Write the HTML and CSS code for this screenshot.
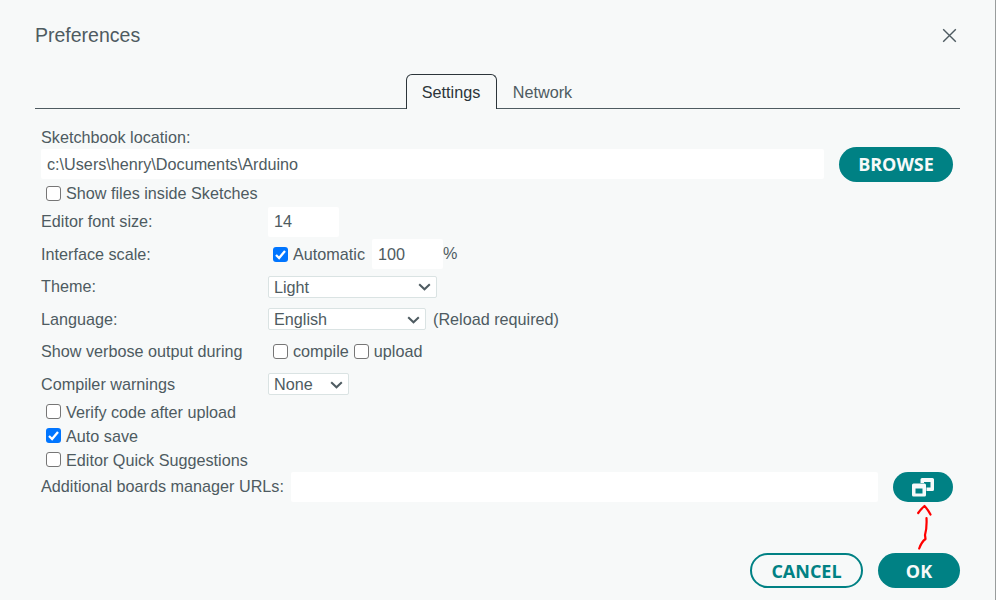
FILE: index.html
```html
<!DOCTYPE html>
<html lang="en">
<head>
<meta charset="utf-8">
<title>Preferences</title>
<link rel="stylesheet" href="styles.css">
</head>
<body>
<main class="dialog">
  <header class="titlebar">
    <h1>Preferences</h1>
    <svg class="close" width="15" height="15" viewBox="0 0 15 15"><path d="M1.2 1.2 13.8 13.8M13.8 1.2 1.2 13.8"/></svg>
  </header>
  <nav class="tabs">
    <span class="tab active">Settings</span>
    <span class="tab">Network</span>
  </nav>
  <section class="form">
    <div class="row r23 heading">Sketchbook location:</div>
    <div class="row r35 spread">
      <span class="field path">c:\Users\henry\Documents\Arduino</span>
      <span class="button browse">BROWSE</span>
    </div>
    <div class="row r23 option"><span class="check"></span><span class="text">Show files inside Sketches</span></div>
    <div class="row r33"><span class="label">Editor font size:</span><span class="field number">14</span></div>
    <div class="row r32"><span class="label flush">Interface scale:</span>
      <span class="option"><span class="check on"><svg viewBox="0 0 15 15"><path d="M3 8 6.1 11 12 4"/></svg></span><span>Automatic</span></span>
      <span class="field number scale">100</span><span class="percent">%</span>
    </div>
    <div class="row r33"><span class="label">Theme:</span>
      <span class="select theme">Light<svg width="13" height="8" viewBox="0 0 13 8"><path d="M1.2 1.2 6.5 6.3 11.8 1.2"/></svg></span>
    </div>
    <div class="row r32"><span class="label flush">Language:</span>
      <span class="select language">English<svg width="13" height="8" viewBox="0 0 13 8"><path d="M1.2 1.2 6.5 6.3 11.8 1.2"/></svg></span>
      <span class="note">(Reload required)</span>
    </div>
    <div class="row r33"><span class="label">Show verbose output during</span>
      <span class="option"><span class="check"></span><span class="text">compile</span></span>
      <span class="option second"><span class="check"></span><span class="text">upload</span></span>
    </div>
    <div class="row r32"><span class="label flush">Compiler warnings</span>
      <span class="select warnings">None<svg width="13" height="8" viewBox="0 0 13 8"><path d="M1.2 1.2 6.5 6.3 11.8 1.2"/></svg></span>
    </div>
    <div class="row r24 option"><span class="check raised"></span><span>Verify code after upload</span></div>
    <div class="row r24 option"><span class="check on raised"><svg viewBox="0 0 15 15"><path d="M3 8 6.1 11 12 4"/></svg></span><span>Auto save</span></div>
    <div class="row r24 option"><span class="check raised"></span><span>Editor Quick Suggestions</span></div>
    <div class="row r30"><span class="urls-label">Additional boards manager URLs:</span><span class="field urls"></span>
      <span class="button expand"><svg width="22" height="19" viewBox="0 0 22 19"><path fill-rule="evenodd" d="M10 0H20.500Q22 0 22 1.500V11.500Q22 13 20.500 13H14.500V9.500H18.500V4H12V6H8.500V1.500Q8.500 0 10 0ZM1.500 5.500H12.500Q14 5.500 14 7V17Q14 18.500 12.500 18.500H1.500Q0 18.500 0 17V7Q0 5.500 1.500 5.500ZM3.500 10.500V15.500H10.500V10.500Z"/></svg></span>
    </div>
  </section>
  <footer class="actions">
    <span class="button cancel">CANCEL</span>
    <span class="button ok">OK</span>
  </footer>
  <svg class="arrow" width="18" height="50" viewBox="0 0 18 50"><path d="M2.200 9Q5 5 8.500 2Q11.500 5 14.500 10.500M10.500 14Q11 24 9 31L9.500 35Q5.500 38 3.200 44.500"/></svg>
</main>
</body>
</html>
```
FILE: styles.css
```css
* { box-sizing: border-box; }
body {
  margin: 0;
  background: #f7f9f9;
  color: #4e5b61;
  font: 16.2px/20px "Liberation Sans", Arial, sans-serif;
}
.dialog {
  position: relative;
  height: 600px;
  padding: 0 35px;
  border-right: 1px solid #999d9d;
  overflow: hidden;
  white-space: nowrap;
}
svg { fill: none; stroke: currentColor; flex: none; }
.titlebar {
  display: flex;
  align-items: center;
  justify-content: space-between;
  height: 70px;
  padding-right: 3px;
}
h1 { margin: 0; font-size: 19.500px; font-weight: 400; }
.close { stroke-width: 1.400; }
.tabs {
  display: flex;
  justify-content: center;
  height: 39px;
  padding: 4px 1px 0 0;
  border-bottom: 1px solid #4e5b61;
}
.tab { height: 35px; padding: 7px 15px; border: 1px solid transparent; border-bottom: 0; }
.tab.active { width: 91px; background: #f7f9f9; border-color: #2c353a; border-radius: 6px 6px 0 0; color: #2c353a; }
.form { padding: 15px 7px 0 6px; }
.row { display: flex; align-items: center; }
.heading { padding-top: 2px; }
.r23 { height: 23px; }
.r24 { height: 24px; }
.r30 { height: 30px; }
.r32 { height: 32px; }
.r33 { height: 33px; }
.r35 { height: 35px; }
.spread { justify-content: space-between; }
.label { width: 227px; padding-bottom: 2px; }
.label.flush { padding-bottom: 0; }
.text { padding-bottom: 1px; }
.field { display: flex; align-items: center; height: 30px; padding: 0 6px 1px; background: #fff; border-radius: 2px; }
.path { width: 783px; margin-bottom: 1px; }
.number { width: 71px; }
.scale { margin-left: 7px; padding-bottom: 0; }
.percent { padding-bottom: 2px; }
.option { display: flex; align-items: center; padding-left: 5px; gap: 5px; }
.check { display: flex; flex: none; width: 15px; height: 15px; background: #fff; border: 1px solid #767676; border-radius: 3px; }
.check.on { background: #0075ff; border: 0; }
.check.raised { margin-bottom: 1px; }
.check svg { width: 15px; height: 15px; stroke: #fff; stroke-width: 2.300; }
.select {
  display: flex;
  align-items: center;
  justify-content: space-between;
  height: 22px;
  padding: 0 5px;
  background: #fff;
  border: 1px solid #dae3e3;
  border-radius: 2px;
}
.select svg { stroke-width: 2; margin-top: 1px; }
.theme { width: 169px; }
.language { width: 158px; }
.warnings { width: 81px; }
.note { margin-left: 7px; }
.urls-label { width: 250px; padding-bottom: 2px; }
.urls { width: 587px; }
.button {
  display: flex;
  align-items: center;
  justify-content: center;
  height: 35px;
  border-radius: 18px;
  background: #008184;
  color: #f7f9f9;
  font: 700 18px/24px "Open Sans", sans-serif;
}
.browse { width: 114px; padding-bottom: 2px; }
.expand { width: 60px; height: 30px; margin-left: 15px; }
.expand svg { fill: #f7f9f9; stroke: none; }
.actions { display: flex; justify-content: flex-end; gap: 15px; margin-top: 51px; }
.cancel { width: 113px; background: transparent; border: 2px solid #008184; color: #008184; }
.ok { width: 82px; }
.arrow { position: absolute; left: 916px; top: 504px; stroke: #f00; stroke-width: 2.200; stroke-linecap: round; stroke-linejoin: round; }
```
